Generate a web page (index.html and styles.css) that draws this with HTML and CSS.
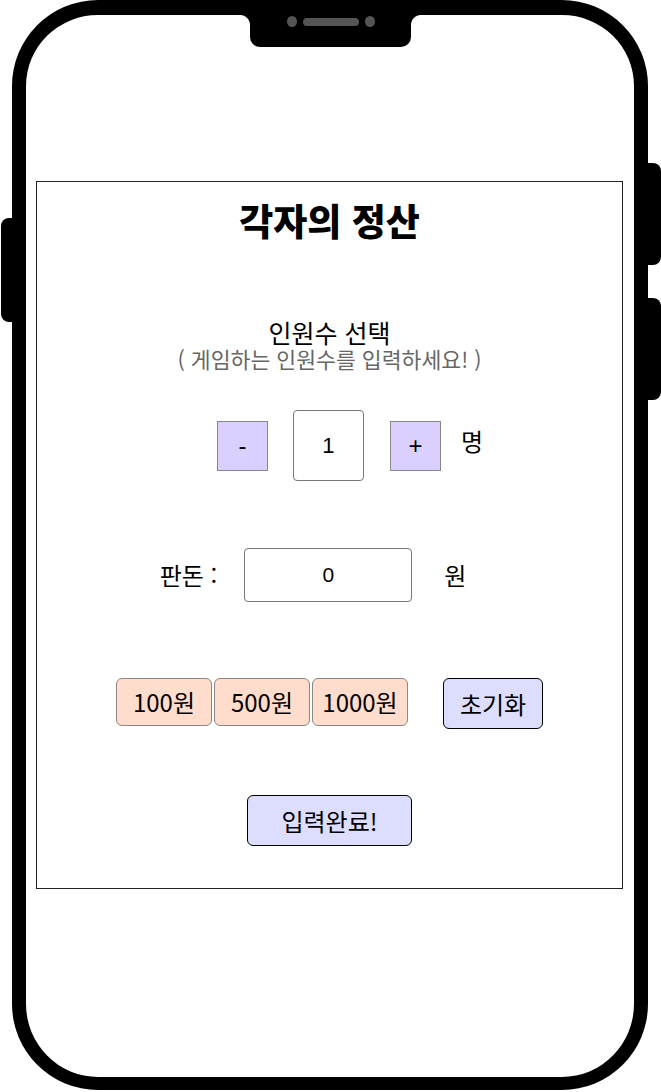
FILE: index.html
```html
<!DOCTYPE html>
<html lang="ko">
<head>
<meta charset="utf-8">
<title>각자의 정산</title>
<link rel="stylesheet" href="styles.css">
</head>
<body>
<div class="phone">
  <div class="notch">
    <span class="dot"></span>
    <span class="speaker"></span>
    <span class="dot"></span>
  </div>
  <span class="side-btn side-left"></span>
  <span class="side-btn side-right-1"></span>
  <span class="side-btn side-right-2"></span>

  <main class="card">
    <h1 class="title">각자의 정산</h1>

    <h2 class="label">인원수 선택</h2>
    <p class="hint">( 게임하는 인원수를 입력하세요! )</p>

    <div class="row counter-row">
      <button class="step-btn" type="button">-</button>
      <input class="count-input" type="text" value="1">
      <button class="step-btn" type="button">+</button>
      <span class="unit unit-people">명</span>
    </div>

    <div class="row pot-row">
      <span class="unit">판돈 :</span>
      <input class="pot-input" type="text" value="0">
      <span class="unit unit-won">원</span>
    </div>

    <div class="row coin-row">
      <div class="coins">
        <button class="coin-btn" type="button">100원</button>
        <button class="coin-btn" type="button">500원</button>
        <button class="coin-btn" type="button">1000원</button>
      </div>
      <button class="action-btn reset-btn" type="button">초기화</button>
    </div>

    <div class="row submit-row">
      <button class="action-btn submit-btn" type="button">입력완료!</button>
    </div>
  </main>
</div>
</body>
</html>
```

FILE: styles.css
```css
* {
  box-sizing: border-box;
}

html, body {
  margin: 0;
  padding: 0;
  background: #ffffff;
}

body {
  font-family: "Noto Sans CJK KR", "Noto Sans", sans-serif;
  color: #000;
}

.phone {
  position: relative;
  width: 636px;
  height: 1090px;
  margin: 0 0 0 12px;
  border-style: solid;
  border-color: #000;
  border-width: 15px 14px 13px 14px;
  border-radius: 86px;
  padding: 166px 11px 0 10px;
  background: #fff;
}

/* notch */
.notch {
  position: absolute;
  top: -15px;
  left: 224px;
  width: 161px;
  height: 47px;
  background: #000;
  border-radius: 0 0 10px 10px;
  display: flex;
  justify-content: center;
  align-items: flex-start;
  gap: 6px;
  padding-top: 17px;
}

.notch::before,
.notch::after {
  content: "";
  position: absolute;
  top: 15px;
  width: 10px;
  height: 10px;
}

.notch::before {
  left: -10px;
  background: radial-gradient(circle at 0 100%, transparent 9.5px, #000 10.5px);
}

.notch::after {
  right: -10px;
  background: radial-gradient(circle at 100% 100%, transparent 9.5px, #000 10.5px);
}

.dot {
  width: 10px;
  height: 11px;
  border-radius: 50%;
  background: #555;
  margin-top: -1px;
}

.speaker {
  width: 56px;
  height: 8px;
  border-radius: 4px;
  background: #555;
  margin-top: 1px;
}

/* side buttons */
.side-btn {
  position: absolute;
  background: #000;
  width: 14px;
}

.side-left {
  left: -25px;
  top: 203px;
  height: 104px;
  border-radius: 8px 0 0 8px;
}

.side-right-1 {
  right: -27px;
  top: 148px;
  height: 102px;
  border-radius: 0 8px 8px 0;
}

.side-right-2 {
  right: -27px;
  top: 283px;
  height: 102px;
  border-radius: 0 8px 8px 0;
}

/* card */
.card {
  border: 1px solid #222;
  padding: 16px 0 42px 0;
  display: flex;
  flex-direction: column;
  align-items: stretch;
}

.title {
  margin: 0;
  font-size: 37px;
  font-weight: 800;
  line-height: 44px;
  text-align: center;
}

.label {
  margin: 77px 0 0 0;
  font-size: 25px;
  font-weight: 400;
  line-height: 26px;
  text-align: center;
}

.hint {
  margin: 2px 0 0 0;
  font-size: 21.6px;
  line-height: 24px;
  color: #666;
  text-align: center;
}

.row {
  display: flex;
  justify-content: center;
  align-items: center;
}

.unit {
  font-size: 24px;
  line-height: 1.2;
}

/* counter */
.counter-row {
  margin-top: 39px;
  padding-left: 41px;
  gap: 25px;
}

.unit-people {
  margin-left: -5px;
  margin-bottom: 9px;
}

.step-btn {
  width: 51px;
  height: 50px;
  margin: 0;
  padding: 0;
  background: #dbcfff;
  border: 1px solid #888;
  border-radius: 0;
  font-family: "Liberation Sans", "Noto Sans CJK KR", sans-serif;
  font-size: 24px;
  font-weight: 400;
  color: #000;
  line-height: 1;
}

.count-input {
  width: 71px;
  height: 71px;
  margin: 0 1px 0 0;
  padding: 0;
  border: 1px solid #777;
  border-radius: 4px;
  background: #fff;
  text-align: center;
  font-family: "Liberation Sans", sans-serif;
  font-size: 22px;
  color: #000;
}

/* pot */
.pot-row {
  margin-top: 67px;
  padding-right: 33px;
  gap: 27px;
}

.unit-won {
  margin-left: 5px;
}

.pot-input {
  width: 168px;
  height: 54px;
  margin: 0;
  padding: 0;
  border: 1px solid #777;
  border-radius: 4px;
  background: #fff;
  text-align: center;
  font-family: "Liberation Sans", sans-serif;
  font-size: 21px;
  color: #000;
}

/* coins */
.coin-row {
  margin-top: 76px;
  gap: 35px;
  align-items: flex-start;
}

.coins {
  display: flex;
  gap: 2px;
}

.coin-btn {
  width: 96px;
  height: 48px;
  margin: 0;
  padding: 0;
  background: #ffdccb;
  border: 1px solid #888;
  border-radius: 6px;
  font-family: "Noto Sans CJK KR", sans-serif;
  font-size: 24px;
  color: #000;
  line-height: 1;
}

.action-btn {
  margin: 0;
  padding: 0;
  background: #ddddff;
  border: 1px solid #000;
  border-radius: 6px;
  font-family: "Noto Sans CJK KR", sans-serif;
  font-size: 24px;
  color: #000;
  line-height: 1;
}

.reset-btn {
  width: 100px;
  height: 51px;
}

.submit-row {
  margin-top: 66px;
}

.submit-btn {
  width: 165px;
  height: 51px;
}
```
